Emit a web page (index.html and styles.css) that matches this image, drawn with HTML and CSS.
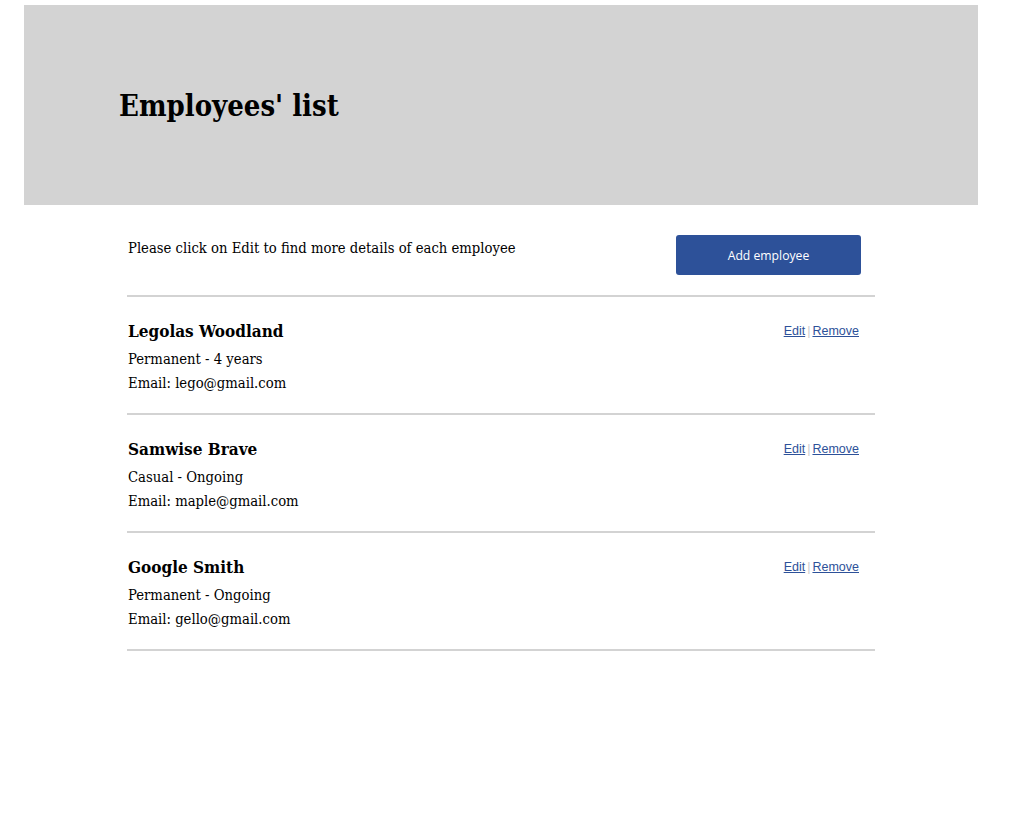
FILE: index.html
```html
<!DOCTYPE html>
<html>
<head>
<meta charset="utf-8">
<link rel="stylesheet" href="styles.css">
</head>
<body>
<header class="hero">
  <h1 class="hero-title">Employees' list</h1>
</header>
<main class="content">
  <div class="intro">
    <p class="intro-text">Please click on Edit to find more details of each employee</p>
    <button class="btn-add">Add employee</button>
  </div>
  <div class="row">
    <div class="row-info">
      <h2 class="name">Legolas Woodland</h2>
      <p class="detail">Permanent - 4 years</p>
      <p class="detail">Email: lego@gmail.com</p>
    </div>
    <div class="actions"><a href="#">Edit</a><span class="sep">|</span><a href="#">Remove</a></div>
  </div>
  <div class="row">
    <div class="row-info">
      <h2 class="name">Samwise Brave</h2>
      <p class="detail">Casual - Ongoing</p>
      <p class="detail">Email: maple@gmail.com</p>
    </div>
    <div class="actions"><a href="#">Edit</a><span class="sep">|</span><a href="#">Remove</a></div>
  </div>
  <div class="row">
    <div class="row-info">
      <h2 class="name">Google Smith</h2>
      <p class="detail">Permanent - Ongoing</p>
      <p class="detail">Email: gello@gmail.com</p>
    </div>
    <div class="actions"><a href="#">Edit</a><span class="sep">|</span><a href="#">Remove</a></div>
  </div>
</main>
</body>
</html>
```

FILE: styles.css
```css
html, body {
  margin: 0;
  padding: 0;
  background: #fff;
}
body {
  font-family: "DejaVu Serif Condensed", "DejaVu Serif", "Liberation Serif", serif;
  font-stretch: condensed;
  color: #000;
  padding: 5px 38px 0 24px;
}
.hero {
  background: #d3d3d3;
  height: 200px;
  display: flex;
  align-items: center;
  padding-left: 95px;
}
.hero-title {
  margin: 2px 0 0 0;
  font-size: 29px;
  font-weight: bold;
}
.content {
  width: 748px;
  margin-left: 103px;
}
.intro {
  display: flex;
  justify-content: space-between;
  align-items: flex-start;
  padding: 30px 14px 20px 0;
  border-bottom: 2px solid #d3d3d3;
}
.intro-text {
  margin: 4px 0 0 1px;
  font-size: 14.7px;
  line-height: 18px;
}
.btn-add {
  width: 185px;
  height: 40px;
  background: #2d5199;
  color: #fff;
  border: none;
  border-radius: 3px;
  font-family: "Open Sans", "Liberation Sans", sans-serif;
  font-stretch: normal;
  font-size: 12.2px;
}
.row {
  display: flex;
  justify-content: space-between;
  align-items: flex-start;
  padding: 22px 16px 0 1px;
  height: 94px;
  border-bottom: 2px solid #d3d3d3;
}
.name {
  margin: 0 0 4px 0;
  font-size: 17px;
  line-height: 24px;
  font-weight: bold;
}
.detail {
  margin: 0;
  font-size: 14.7px;
  line-height: 24px;
}
.actions {
  font-family: "Liberation Sans", Arial, sans-serif;
  font-stretch: normal;
  font-size: 12.5px;
  padding-top: 5px;
}
.actions a {
  color: #2d5199;
}
.sep {
  color: #ccc;
  margin: 0 2px;
}
```
